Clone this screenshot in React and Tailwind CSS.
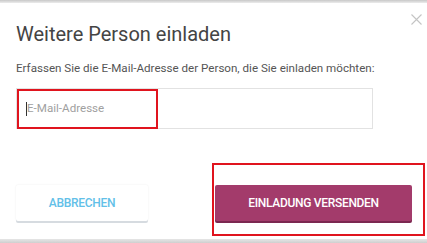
import React from "react";

export default function App() {
  return (
    <div
      className="w-[427px] h-[243px] bg-white overflow-hidden flex flex-col"
      style={{ fontFamily: "Roboto, 'Liberation Sans', sans-serif" }}
    >
      <div className="h-[3px] bg-gradient-to-b from-[#c8c8c8] to-[#ececec]" />
      <div className="relative flex-1 flex flex-col px-4">
        <button className="absolute right-[6px] top-[11px] w-[10px] h-[10px] text-[#c4c4c4]">
          <svg width="11" height="11" viewBox="0 0 11 11" stroke="currentColor" strokeWidth="1.1">
            <path d="M0.5 0.5 L10.5 10.5 M10.5 0.5 L0.5 10.5" />
          </svg>
        </button>
        <h1 className="mt-[18px] text-[20px] leading-[26px] text-[#444] font-normal">
          Weitere Person einladen
        </h1>
        <p className="mt-[14px] text-[11.6px] leading-[15px] text-[#555]">
          Erfassen Sie die E-Mail-Adresse der Person, die Sie einladen möchten:
        </p>
        <div className="mt-[12px] relative w-[357px] h-[41px] border border-[#e2e2e2] flex items-center pl-[9px]">
          <span className="w-px h-[14px] bg-[#333]" />
          <span className="text-[11.6px] text-[#a0a0a0]">E-Mail-Adresse</span>
          <div className="absolute left-0 top-0 w-[141px] h-[40px] border-2 border-[#e0141e]" />
        </div>
        <div className="mt-[56px] flex items-start">
          <button className="shrink-0 w-[132px] h-[36px] bg-white rounded-[2px] shadow-[0_2px_0_#d6dbe0,0_0_2px_rgba(0,0,0,0.08)] text-[#62c0e8] text-[12px] font-medium tracking-tight">
            ABBRECHEN
          </button>
          <div className="shrink-0 ml-[64px] -mt-[22px] relative w-[213px] h-[73px] border-2 border-[#e0141e]">
            <button className="absolute left-[1px] top-[20px] w-[197px] h-[36px] rounded-[2px] bg-[#a33b6b] shadow-[0_2px_0_#7b2750] text-white text-[12px] font-medium tracking-tight">
              EINLADUNG VERSENDEN
            </button>
          </div>
        </div>
      </div>
      <div className="h-[4px] bg-gradient-to-b from-[#e6e6e6] to-[#cfcfcf]" />
    </div>
  );
}
